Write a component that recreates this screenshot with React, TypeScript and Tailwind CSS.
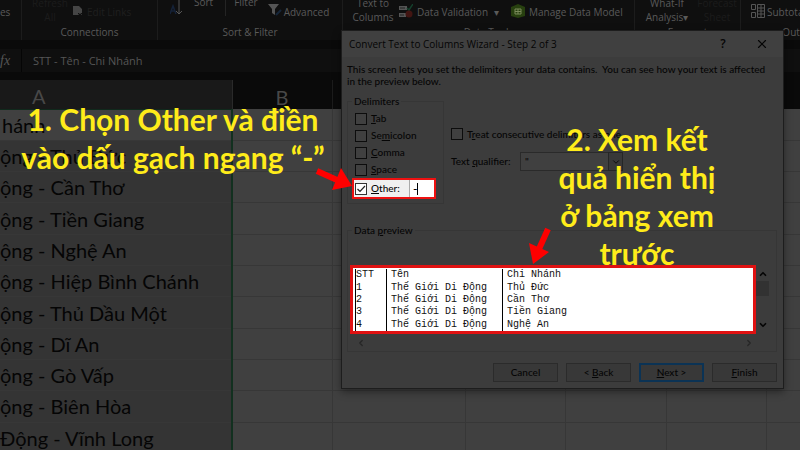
import type { ReactNode } from 'react'
import { ChevronDown, ChevronLeft, ChevronRight, ChevronUp, X } from 'lucide-react'

const branches = [
  'hánh',
  'ộng - Thủ Đức',
  'ộng - Cần Thơ',
  'ộng - Tiền Giang',
  'ộng - Nghệ An',
  'ộng - Hiệp Bình Chánh',
  'ộng - Thủ Dầu Một',
  'ộng - Dĩ An',
  'ộng - Gò Vấp',
  'ộng - Biên Hòa',
  'Động - Vĩnh Long',
]

const preview = [
  ['STT', 'Tên', 'Chi Nhánh'],
  ['1', 'Thế Giới Di Động', 'Thủ Đức'],
  ['2', 'Thế Giới Di Động', 'Cần Thơ'],
  ['3', 'Thế Giới Di Động', 'Tiền Giang'],
  ['4', 'Thế Giới Di Động', 'Nghệ An'],
]

function RibbonGroup({ label, className, children }: { label: string; className: string; children: ReactNode }) {
  return (
    <div className={`flex h-10 shrink-0 flex-col justify-end border-r border-[#1c1c1c] ${className}`}>
      <div className="flex h-6 items-end">{children}</div>
      <div className="h-4 text-center leading-4">{label}</div>
    </div>
  )
}

function Ribbon() {
  return (
    <div className="flex h-10 overflow-hidden bg-[#0f0f0f] text-[10px] whitespace-nowrap text-[#5a5a5a]">
      <RibbonGroup label="" className="w-[22px]">
        <span className="h-5 leading-4">es</span>
      </RibbonGroup>
      <RibbonGroup label="Connections" className="w-[136px]">
        <div className="ml-2 w-10 text-center leading-[14px] text-[#1c1c1c]">
          Refresh
          <br />
          All
        </div>
        <svg className="mb-2 ml-[3px] h-[10px] w-[10px]" viewBox="0 0 10 10">
          <path d="M0 0h6l3 3v4H5v2H0z" fill="#454545" />
          <path d="M5 9l2-2 2 2" fill="none" stroke="#333" />
        </svg>
        <span className="ml-1 h-5 leading-4 text-[#1f1f1f]">Edit Links</span>
      </RibbonGroup>
      <RibbonGroup label="Sort & Filter" className="w-[185px]">
        <svg className="mb-[9px] ml-3 h-4 w-3" viewBox="0 0 12 16">
          <path d="M0 15L3 7l3 8M1 12h4" fill="none" stroke="#152238" strokeWidth="1.5" />
          <path d="M9 0v15M6 12l3 3 3-3" fill="none" stroke="#555" />
        </svg>
        <span className="mb-[14px] ml-3 leading-4">Sort</span>
        <span className="mb-2 ml-3 h-4 border-l border-[#242424]" />
        <span className="mb-[14px] ml-2 leading-4">Filter</span>
        <svg className="mb-2 ml-[10px] h-3 w-[14px] shrink-0" viewBox="0 0 14 12">
          <path d="M0 0h11L7 5v6L4 9V5z" fill="#555" />
          <path d="M8 11l5-5" stroke="#16263a" strokeWidth="2" />
        </svg>
        <span className="ml-0.5 h-5 leading-4">Advanced</span>
      </RibbonGroup>
      <RibbonGroup label="Data Tools" className="w-[292px]">
        <div className="ml-2 w-11 text-center leading-[14px]">
          Text to
          <br />
          Columns
        </div>
        <svg className="mb-1.5 ml-1 h-[14px] w-[14px] shrink-0" viewBox="0 0 14 14">
          <path d="M0 2h8v4H0zM0 9h7v4H0z" fill="#555" />
          <path d="M1 4h5M1 11h4" stroke="#222" />
          <path d="M8 4l2 2 4-6" fill="none" stroke="#14402c" strokeWidth="1.5" />
          <circle cx="10" cy="10" r="3.5" fill="#421512" />
        </svg>
        <span className="ml-1 h-5 leading-4">Data Validation</span>
        <span className="ml-1.5 h-5 leading-4">▾</span>
        <svg className="mb-1.5 ml-3 h-[14px] w-[14px] shrink-0" viewBox="0 0 14 14">
          <path d="M0 3l7-3 7 3v9l-7 2-7-2z" fill="#27400f" />
          <path d="M4 5h6v5H4zM7 5v5M4 7.500h6" fill="none" stroke="#7a8a5a" />
        </svg>
        <span className="ml-1 h-5 leading-4">Manage Data Model</span>
      </RibbonGroup>
      <RibbonGroup label="Forecast" className="w-[106px]">
        <div className="ml-2 w-12 text-center leading-[14px]">
          What-If
          <br />
          Analysis▾
        </div>
        <div className="ml-1 w-11 text-center leading-[14px] text-[#1c1c1c]">
          Forecast
          <br />
          Sheet
        </div>
      </RibbonGroup>
      <RibbonGroup label="Outline" className="w-[118px]">
        <svg className="mb-1.5 ml-[10px] h-[14px] w-[14px] shrink-0" viewBox="0 0 14 14">
          <path d="M.5.5h4v5h-4zM.5 8.500h4v5h-4zM6.500.5h7v13h-7zM6.500 4h7M6.500 7h7M6.500 10h7M10 0v14" fill="none" stroke="#555" />
        </svg>
        <span className="ml-0.5 h-5 leading-4">Subtotal</span>
      </RibbonGroup>
      <div className="flex-1" />
    </div>
  )
}

function Sheet() {
  return (
    <table className="h-[374px] w-full table-fixed border-collapse bg-[#404040] text-left font-[Lato,'Open_Sans',sans-serif]">
      <colgroup>
        <col className="w-[232px]" />
        <col className="w-[100px]" />
        <col className="w-[133px]" />
        <col className="w-[100px]" />
        <col className="w-[101px]" />
        <col className="w-[100px]" />
        <col />
      </colgroup>
      <thead>
        <tr className="h-[29px] bg-[#0a0a0a] text-xl leading-6 text-[#484848]">
          <th className="border-r border-b border-r-[#2a2a2a] border-b-[#10291c] bg-[#191919] pt-1 pl-8 font-normal">A</th>
          <th className="border-r border-[#1c1c1c] pt-1 text-center font-normal">B</th>
          <th colSpan={5} />
        </tr>
      </thead>
      <tbody>
        {branches.map((name, i) => (
          <tr key={name} className="border-b border-[#373737]">
            <td
              className={`overflow-hidden border-r-2 border-r-[#12301f] py-0 text-xl leading-6 whitespace-nowrap text-[#050505] ${
                i === 0 ? 'bg-[#404040] pl-0.5' : 'bg-[#343434]'
              }`}
            >
              {name}
            </td>
            <td className="border-r border-[#373737]" />
            <td className="border-r border-[#373737]" />
            <td className="border-r border-[#373737]" />
            <td className="border-r border-[#373737]" />
            <td className="border-r border-[#373737]" />
            <td />
          </tr>
        ))}
      </tbody>
    </table>
  )
}

const box = 'h-3 w-3 shrink-0 appearance-none border border-[#0c0c0c] bg-[#404040]'

function Delimiter({ children }: { children: ReactNode }) {
  return (
    <label className="flex h-[17px] items-center gap-1">
      <input type="checkbox" className={box} />
      <span>{children}</span>
    </label>
  )
}

function WizardButton({ primary, children }: { primary?: boolean; children: ReactNode }) {
  return (
    <button
      className={`flex h-[19px] w-[65px] items-center justify-center bg-[#383838] ${
        primary ? 'border-2 border-[#0b3355]' : 'border border-[#2b2b2b]'
      }`}
    >
      <span>{children}</span>
    </button>
  )
}

function Wizard() {
  return (
    <div
      role="dialog"
      aria-label="Convert Text to Columns Wizard"
      className="absolute top-[30px] left-[341px] w-[443px] border border-[#1d1d1d] bg-[#3c3c3c] text-[10px] text-[#050505] shadow-[0_3px_8px_rgba(0,0,0,0.4)]"
    >
      <div className="flex h-[26px] items-center bg-[#404040] pl-[7px]">
        <h1 className="flex-1">Convert Text to Columns Wizard - Step 2 of 3</h1>
        <button className="w-7 text-xs font-semibold">?</button>
        <button aria-label="Close" className="mr-3 ml-4 p-0.5">
          <X className="h-[14px] w-[14px]" strokeWidth={2} />
        </button>
      </div>

      <div className="px-[5px] pt-[6px] pb-1.5 font-[Lato,'Open_Sans',sans-serif] font-medium">
        <p className="leading-3 whitespace-nowrap">
          This screen lets you set the delimiters your data contains.&nbsp; You can see how your text is affected
          <br />
          in the preview below.
        </p>

        <div className="mt-[6px] flex">
          <fieldset className="w-[97px] border border-[#363636] pb-1">
            <legend className="ml-1 px-0.5 leading-4">Delimiters</legend>
            <div className="pt-px pl-[7px]">
              <Delimiter><u>T</u>ab</Delimiter>
              <Delimiter>Se<u>m</u>icolon</Delimiter>
              <Delimiter><u>C</u>omma</Delimiter>
              <Delimiter><u>S</u>pace</Delimiter>
            </div>
            {/* the step being pointed at stays bright */}
            <div className="ml-1 flex h-[21px] w-[84px] border-2 border-[#ee1111] bg-[#f0f0f0]">
              <label className="flex flex-1 items-center gap-1 pl-px">
                <span className="relative flex">
                  <input type="checkbox" defaultChecked className="h-3 w-3 appearance-none border border-[#333] bg-white" />
                  <svg className="absolute h-3 w-3" viewBox="0 0 12 12">
                    <path d="M2.500 6l2.500 2.500 5-5.500" fill="none" stroke="#222" strokeWidth="1.200" />
                  </svg>
                </span>
                <span><u>O</u>ther:</span>
              </label>
              <div className="flex w-[25px] items-center border-l border-[#aaa] bg-white pl-[3px]">
                <input aria-label="Other delimiter" defaultValue="-" className="w-1 text-xs" />
                <span className="h-3 w-px bg-black" />
              </div>
            </div>
          </fieldset>

          <div className="ml-[7px] pt-[33px]">
            <label className="flex h-4 items-center gap-1">
              <input type="checkbox" className={box} />
              <span>T<u>r</u>eat consecutive delimiters as one</span>
            </label>
            <div className="mt-[10px] flex items-center">
              <label htmlFor="qualifier" className="w-[69px] whitespace-nowrap">Text <u>q</u>ualifier:</label>
              <span className="relative flex">
                <select id="qualifier" className="h-[19px] w-[103px] appearance-none border border-[#2a2a2a] bg-[#404040] pl-1">
                  <option>"</option>
                </select>
                <span className="pointer-events-none absolute right-0 flex h-[19px] w-[15px] items-center justify-center border border-[#262626] bg-[#383838]">
                  <ChevronDown className="h-[10px] w-[10px]" />
                </span>
              </span>
            </div>
          </div>
        </div>

        <fieldset className="mt-[18px] mr-px border border-[#363636]">
          <legend className="ml-1 px-0.5 leading-4">Data <u>p</u>review</legend>
          <div className="mt-[27px] ml-0.5 flex">
            <div className="w-[406px] border-3 border-[#e01212] bg-white pt-px pl-0.5">
              <table className="h-[62px] w-full table-fixed font-['Liberation_Mono',monospace] text-[10px] text-[#111]">
                <colgroup>
                  <col className="w-[31px]" />
                  <col className="w-[116px]" />
                  <col />
                </colgroup>
                <tbody>
                  {preview.map((row) => (
                    <tr key={row[0]}>
                      <td className="border-l border-black p-0 leading-3">{row[0]}</td>
                      <td className="border-l border-black p-0 pl-1 leading-3">{row[1]}</td>
                      <td className="border-l border-black p-0 pl-1 leading-3">{row[2]}</td>
                    </tr>
                  ))}
                </tbody>
              </table>
            </div>
            <div className="flex w-[13px] flex-col items-center py-1">
              <ChevronUp className="h-[10px] w-[10px]" strokeWidth={4} />
              <div className="mt-0.5 h-[15px] w-full bg-[#323232]" />
              <ChevronDown className="mt-auto h-[10px] w-[10px]" strokeWidth={4} />
            </div>
          </div>
          <div className="mr-[22px] ml-2 flex h-[17px] items-center justify-between text-[#262626]">
            <ChevronLeft className="h-[10px] w-[10px]" strokeWidth={3} />
            <ChevronRight className="h-[10px] w-[10px]" strokeWidth={3} />
          </div>
        </fieldset>

        <div className="mt-[11px] mr-px flex justify-end gap-2">
          <WizardButton>Cancel</WizardButton>
          <WizardButton>&lt; <u>B</u>ack</WizardButton>
          <WizardButton primary><u>N</u>ext &gt;</WizardButton>
          <WizardButton><u>F</u>inish</WizardButton>
        </div>
      </div>
    </div>
  )
}

const note = "absolute text-center font-[Lato,'Open_Sans',sans-serif] text-[30px] leading-[38px] font-bold whitespace-nowrap text-[#ffec1a]"

export default function App() {
  return (
    <main className="relative h-screen overflow-hidden bg-[#0a0a0a] font-['Open_Sans','Noto_Sans',sans-serif]">
      <Ribbon />
      <div className="mt-[9px] mb-2 flex h-[23px] items-center bg-[#0f0f0f] text-[11px] text-[#555]">
        <span className="w-[21px] font-['Liberation_Serif',serif] text-sm italic">fx</span>
        <span className="h-full border-l border-[#050505] pl-[11px] leading-6">STT - Tên - Chi Nhánh</span>
      </div>
      <Sheet />
      <Wizard />

      <p className={`top-[100px] left-[20px] w-[306px] ${note}`}>
        1. Chọn Other và điền
        <br />
        vào dấu gạch ngang “-”
      </p>
      <p className={`top-[120px] left-[555px] w-[164px] ${note}`}>
        2. Xem kết
        <br />
        quả hiển thị
        <br />
        ở bảng xem
        <br />
        trước
      </p>
      <svg className="absolute top-[165px] left-[313px] h-[30px] w-[40px]" viewBox="0 0 40 30">
        <path d="M4 6l20 9" stroke="#ff0000" strokeWidth="6" />
        <path d="M39 21L28 3 19 25z" fill="#ff0000" />
      </svg>
      <svg className="absolute top-[225px] left-[526px] h-[40px] w-[28px]" viewBox="0 0 28 40">
        <path d="M22 4L13 24" stroke="#ff0000" strokeWidth="6" />
        <path d="M7 39L3 18l20 9z" fill="#ff0000" />
      </svg>
    </main>
  )
}
